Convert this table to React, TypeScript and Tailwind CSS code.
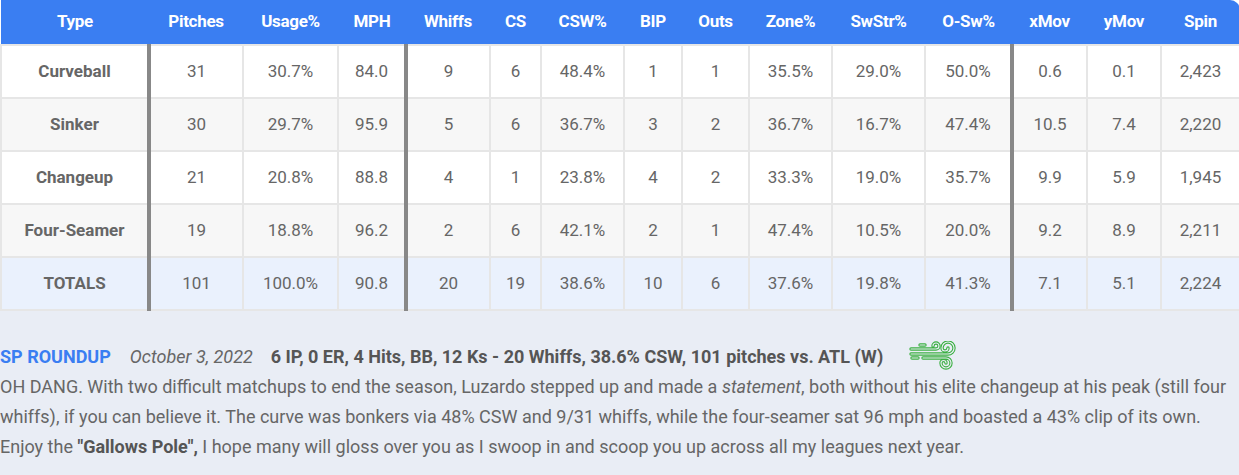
import React from "react";

type Row = {
  type: string;
  vals: string[];
};

const headers = [
  "Type",
  "Pitches",
  "Usage%",
  "MPH",
  "Whiffs",
  "CS",
  "CSW%",
  "BIP",
  "Outs",
  "Zone%",
  "SwStr%",
  "O-Sw%",
  "xMov",
  "yMov",
  "Spin",
];

// column widths in px, read off the screenshot
const widths = [148, 94, 95, 68, 84, 51, 83, 58, 67, 83, 93, 87, 75, 74, 79];

// columns that start with the thick grey divider
const thick = new Set([1, 4, 12]);

const rows: Row[] = [
  { type: "Curveball", vals: ["31", "30.7%", "84.0", "9", "6", "48.4%", "1", "1", "35.5%", "29.0%", "50.0%", "0.6", "0.1", "2,423"] },
  { type: "Sinker", vals: ["30", "29.7%", "95.9", "5", "6", "36.7%", "3", "2", "36.7%", "16.7%", "47.4%", "10.5", "7.4", "2,220"] },
  { type: "Changeup", vals: ["21", "20.8%", "88.8", "4", "1", "23.8%", "4", "2", "33.3%", "19.0%", "35.7%", "9.9", "5.9", "1,945"] },
  { type: "Four-Seamer", vals: ["19", "18.8%", "96.2", "2", "6", "42.1%", "2", "1", "47.4%", "10.5%", "20.0%", "9.2", "8.9", "2,211"] },
];

const totals: Row = {
  type: "TOTALS",
  vals: ["101", "100.0%", "90.8", "20", "19", "38.6%", "10", "6", "37.6%", "19.8%", "41.3%", "7.1", "5.1", "2,224"],
};

const WindIcon = () => {
  const paths = [
    "M12 4h5",
    "M3 8h25a3 3 0 1 0-3-3",
    "M3 13h37a6 6 0 1 0-6-6a3 3 0 0 0 6 0",
    "M15 17h23a5 5 0 1 1-5 5a2.5 2.5 0 0 1 5 0",
    "M4 17h6",
  ];
  return (
    <svg width="50" height="30" viewBox="0 0 50 30" fill="none" strokeLinecap="round" strokeLinejoin="round">
      {paths.map((d, i) => (
        <path key={"o" + i} d={d} stroke="#3cb043" strokeWidth="3.4" />
      ))}
      {paths.map((d, i) => (
        <path key={"i" + i} d={d} stroke="#e9edf5" strokeWidth="1.2" />
      ))}
    </svg>
  );
};

const BodyRow = ({ row, bg }: { row: Row; bg: string }) => (
  <tr className={`h-[53px] ${bg}`}>
    <td className="border-2 border-[#e6e6e6] text-center font-bold text-[17px] text-[#666]">{row.type}</td>
    {row.vals.map((v, i) => (
      <td
        key={i}
        className={`border-2 border-[#e6e6e6] text-center text-[17px] text-[#666] ${
          thick.has(i + 1) ? "border-l-[4px] border-l-[#888]" : ""
        }`}
      >
        {v}
      </td>
    ))}
  </tr>
);

export default function App() {
  return (
    <div
      className="w-[1239px] h-[475px] overflow-hidden bg-[#e9edf5]"
      style={{ fontFamily: "Roboto, 'Liberation Sans', sans-serif" }}
    >
      <table className="w-full table-fixed border-collapse bg-white">
        <colgroup>
          {widths.map((w, i) => (
            <col key={i} style={{ width: w }} />
          ))}
        </colgroup>
        <thead>
          <tr className="h-[45px]">
            {headers.map((h, i) => (
              <th
                key={h}
                className={`bg-[#3a7ef2] text-white font-bold text-[17px] tracking-[-0.3px] text-center border-b-2 border-b-[#e6e6e6] ${
                  i === headers.length - 1 ? "rounded-tr-[10px]" : ""
                }`}
              >
                {h}
              </th>
            ))}
          </tr>
        </thead>
        <tbody>
          {rows.map((r, i) => (
            <BodyRow key={r.type} row={r} bg={i % 2 === 0 ? "bg-white" : "bg-[#f7f7f7]"} />
          ))}
          <BodyRow row={totals} bg="bg-[#eaf1fd]" />
        </tbody>
      </table>

      <div className="pt-[30px]">
        <div className="flex items-center h-[30px] text-[18px]">
          <span className="font-bold text-[#3a7ef2]">SP ROUNDUP</span>
          <span className="italic text-[#666] ml-[19px]">October 3, 2022</span>
          <span className="font-bold text-[#555] ml-[18px]">
            6 IP, 0 ER, 4 Hits, BB, 12 Ks - 20 Whiffs, 38.6% CSW, 101 pitches vs. ATL (W)
          </span>
          <span className="ml-[25px] flex items-center">
            <WindIcon />
          </span>
        </div>
        <p className="mt-[1px] text-[18px] leading-[30px] text-[#666]">
          OH DANG. With two difficult matchups to end the season, Luzardo stepped up and made a{" "}
          <em>statement</em>, both without his elite changeup at his peak (still four whiffs), if you can believe
          it. The curve was bonkers via 48% CSW and 9/31 whiffs, while the four-seamer sat 96 mph and boasted a 43%
          clip of its own. Enjoy the <strong className="text-[#555]">"Gallows Pole",</strong> I hope many will
          gloss over you as I swoop in and scoop you up across all my leagues next year.
        </p>
      </div>
    </div>
  );
}
